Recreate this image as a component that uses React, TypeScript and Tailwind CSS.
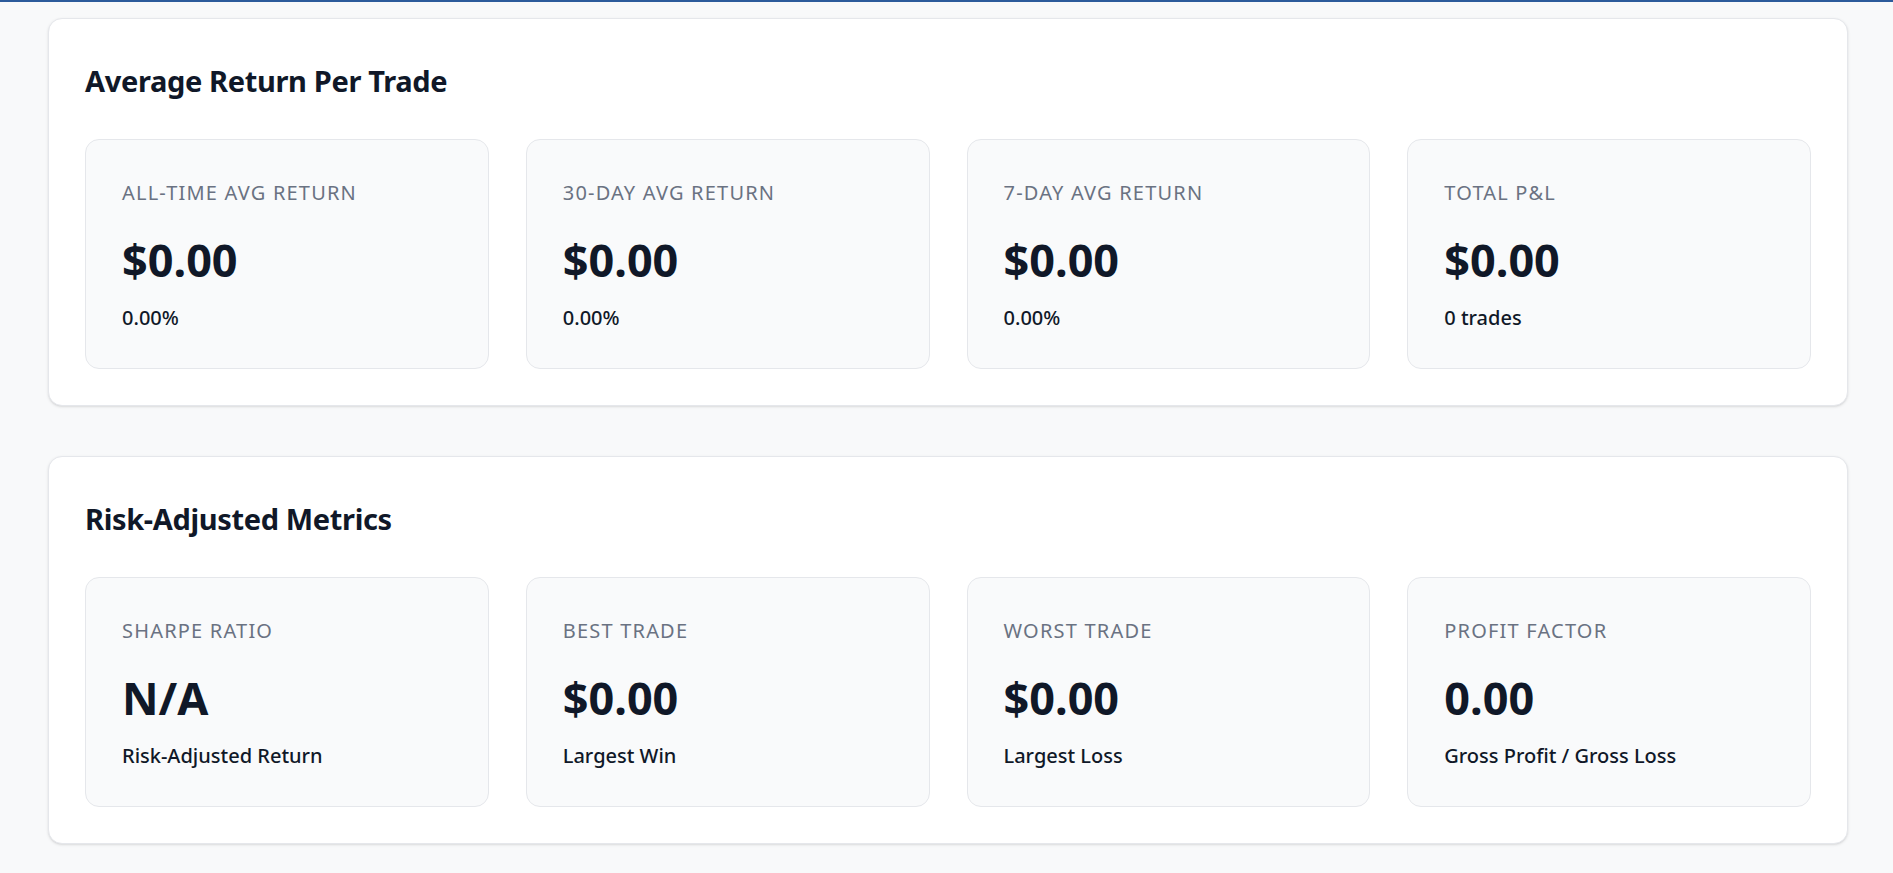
const avgReturn = [
  { label: "All-Time Avg Return", value: "$0.00", sub: "0.00%" },
  { label: "30-Day Avg Return", value: "$0.00", sub: "0.00%" },
  { label: "7-Day Avg Return", value: "$0.00", sub: "0.00%" },
  { label: "Total P&L", value: "$0.00", sub: "0 trades" },
];

const riskMetrics = [
  { label: "Sharpe Ratio", value: "N/A", sub: "Risk-Adjusted Return" },
  { label: "Best Trade", value: "$0.00", sub: "Largest Win" },
  { label: "Worst Trade", value: "$0.00", sub: "Largest Loss" },
  { label: "Profit Factor", value: "0.00", sub: "Gross Profit / Gross Loss" },
];

function StatCard({ label, value, sub }: { label: string; value: string; sub: string }) {
  return (
    <div className="bg-gray-50 border border-gray-200 rounded-[14px] px-9 pt-9 pb-[35px]">
      <div className="text-[20px] leading-[30px] uppercase tracking-[0.06em] text-gray-500 mt-[2px] mb-[27px]">{label}</div>
      <div className="text-[45px] leading-[50px] font-bold text-gray-900 mb-[18px]">{value}</div>
      <div className="text-[20px] leading-[30px] font-medium text-gray-900">{sub}</div>
    </div>
  );
}

function Section({ title, items }: { title: string; items: typeof avgReturn }) {
  return (
    <div className="w-[1800px] bg-white border border-gray-200 rounded-[14px] shadow-sm p-9">
      <h2 className="text-[29px] leading-[48px] font-bold tracking-[-0.012em] text-gray-900 mt-[2px] mb-[34px]">{title}</h2>
      <div className="grid grid-cols-4 gap-[37px]">
        {items.map((item) => (
          <StatCard key={item.label} {...item} />
        ))}
      </div>
    </div>
  );
}

export default function App() {
  return (
    <div
      className="min-h-screen bg-[#f8f9fa] border-t-2 border-[#2c5b9b]"
      style={{ fontFamily: '"Noto Sans", "Open Sans", sans-serif' }}
    >
      <div className="pl-[48px] pt-[16px] pb-[30px] flex flex-col gap-[50px]">
        <Section title="Average Return Per Trade" items={avgReturn} />
        <Section title="Risk-Adjusted Metrics" items={riskMetrics} />
      </div>
    </div>
  );
}
